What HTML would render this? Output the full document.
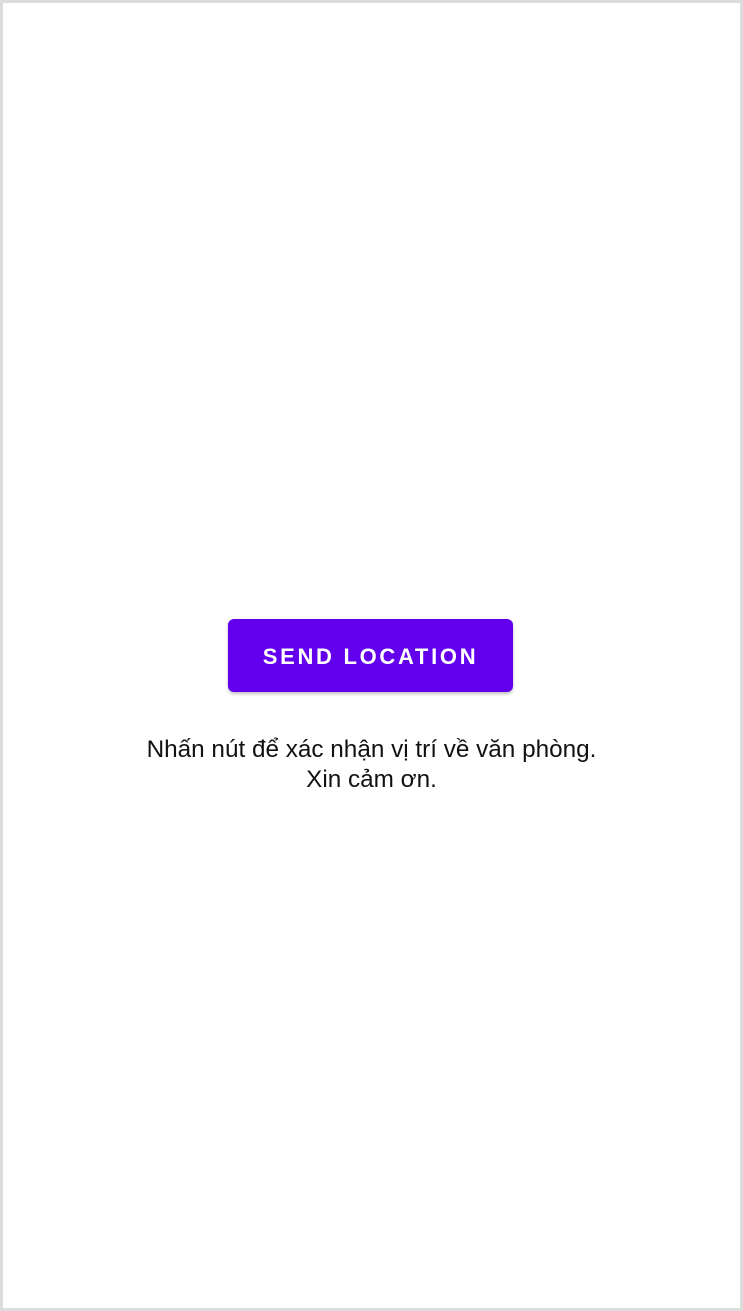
<!DOCTYPE html>
<html><head><meta charset="utf-8"><style>
html,body{margin:0;padding:0;}
body{width:743px;height:1311px;position:relative;background:#fff;font-family:"Liberation Sans",sans-serif;overflow:hidden;}
.frame{position:absolute;left:0;top:0;width:737px;height:1305px;border:3px solid #dcdcdc;}
.btn{position:absolute;left:228px;top:619px;width:285px;height:73px;background:#6200ee;border-radius:6px;box-shadow:0 2px 3px rgba(0,0,0,0.25);color:#fff;font-size:22px;font-weight:bold;letter-spacing:2.7px;text-align:center;line-height:75px;}
.t{position:absolute;left:0;width:743px;top:735px;text-align:center;font-size:24.3px;line-height:30px;color:#111;}
</style></head><body>
<div class="frame"></div>
<div class="btn">SEND LOCATION</div>
<div class="t">Nhấn nút để xác nhận vị trí về văn phòng.<br>Xin cảm ơn.</div>
</body></html>
